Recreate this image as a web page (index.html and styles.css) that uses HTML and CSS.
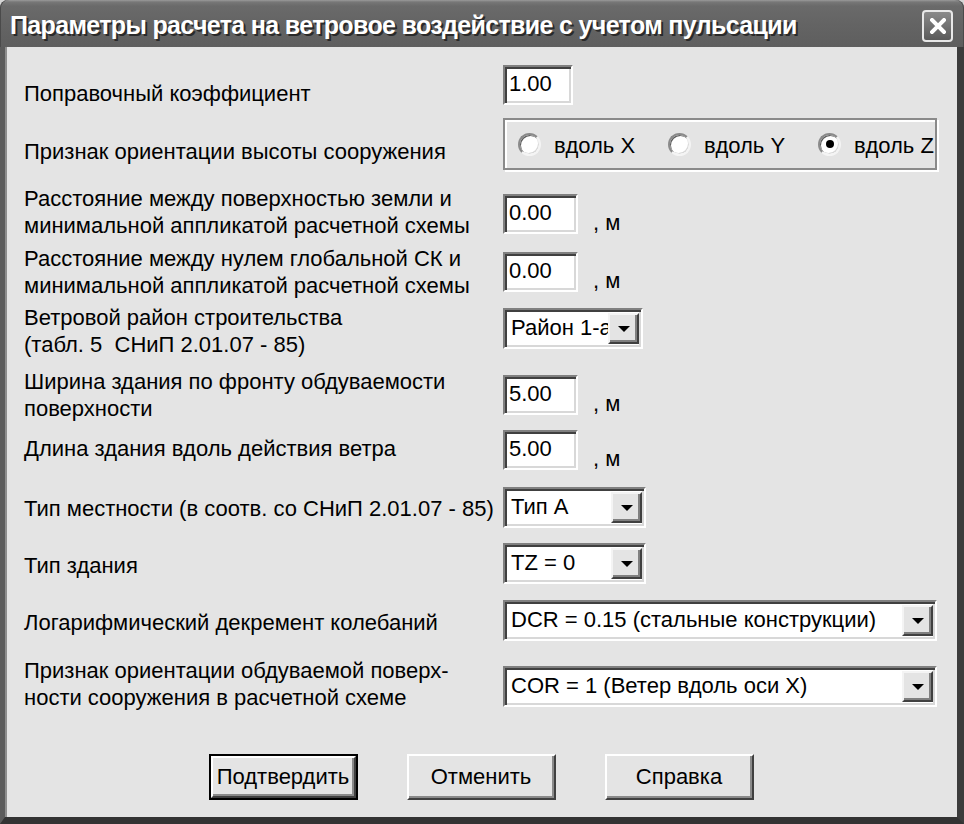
FILE: index.html
```html
<!DOCTYPE html>
<html lang="ru">
<head>
<meta charset="utf-8">
<title>Параметры расчета</title>
<link rel="stylesheet" href="styles.css">
</head>
<body>
<div class="window">
  <div class="titlebar">
    <span class="title">Параметры расчета на ветровое воздействие с учетом пульсации</span>
    <span class="close"><svg width="16" height="16" viewBox="0 0 16 16"><path d="M2 2 L14 14 M14 2 L2 14" stroke="#fff" stroke-width="4" stroke-linecap="square"/></svg></span>
  </div>
  <div class="frame">
    <div class="content">
      <div class="form">
        <div class="label off-15">Поправочный коэффициент</div>
        <div class="ctrl"><div class="edit edit-short">1.00</div></div>

        <div class="label off-20">Признак ориентации высоты сооружения</div>
        <div class="ctrl">
          <div class="group">
            <div class="option"><span class="radio"></span><span>вдоль X</span></div>
            <div class="option"><span class="radio"></span><span>вдоль Y</span></div>
            <div class="option"><span class="radio checked"></span><span>вдоль Z</span></div>
          </div>
        </div>

        <div class="label">Расстояние между поверхностью земли и<br>минимальной аппликатой расчетной схемы</div>
        <div class="ctrl off-9"><div class="edit">0.00</div><span class="unit">, м</span></div>

        <div class="label">Расстояние между нулем глобальной СК и<br>минимальной аппликатой расчетной схемы</div>
        <div class="ctrl off-7"><div class="edit">0.00</div><span class="unit">, м</span></div>

        <div class="label">Ветровой район строительства<br>(табл. 5&nbsp; СНиП 2.01.07 - 85)</div>
        <div class="ctrl off-4"><div class="select sel-140"><span class="sel-text">Район 1-а</span><span class="sel-btn"><span class="tri"></span></span></div></div>

        <div class="label">Ширина здания по фронту обдуваемости<br>поверхности</div>
        <div class="ctrl off-7"><div class="edit">5.00</div><span class="unit">, м</span></div>

        <div class="label off-5">Длина здания вдоль действия ветра</div>
        <div class="ctrl"><div class="edit">5.00</div><span class="unit">, м</span></div>

        <div class="label off-8">Тип местности (в соотв. со СНиП 2.01.07 - 85)</div>
        <div class="ctrl"><div class="select sel-143"><span class="sel-text">Тип А</span><span class="sel-btn"><span class="tri"></span></span></div></div>

        <div class="label off-9">Тип здания</div>
        <div class="ctrl"><div class="select sel-143"><span class="sel-text">TZ = 0</span><span class="sel-btn"><span class="tri"></span></span></div></div>

        <div class="label off-9">Логарифмический декремент колебаний</div>
        <div class="ctrl"><div class="select sel-wide"><span class="sel-text">DCR = 0.15 (стальные конструкции)</span><span class="sel-btn"><span class="tri"></span></span></div></div>

        <div class="label">Признак ориентации обдуваемой поверх-<br>ности сооружения в расчетной схеме</div>
        <div class="ctrl off-9"><div class="select sel-wide"><span class="sel-text">COR = 1 (Ветер вдоль оси X)</span><span class="sel-btn"><span class="tri"></span></span></div></div>
      </div>
      <div class="buttons">
        <div class="button default"><span class="btn-face">Подтвердить</span></div>
        <div class="button"><span class="btn-face">Отменить</span></div>
        <div class="button"><span class="btn-face">Справка</span></div>
      </div>
    </div>
  </div>
</div>
</body>
</html>
```
FILE: styles.css
```css
html, body {
  margin: 0;
  padding: 0;
  background: #d6d6d6;
}
body {
  font-family: "Liberation Sans", Arial, sans-serif;
  font-size: 22px;
  color: #000;
}
.window {
  width: 964px;
  height: 824px;
  display: flex;
  flex-direction: column;
}
.titlebar {
  height: 47px;
  flex: none;
  display: flex;
  align-items: flex-start;
  border-radius: 8px 8px 0 0;
  background: linear-gradient(#9a9a9a 0, #777 2px, #6a6a6a 6px, #646464 50%, #5e5e5e 100%);
  box-shadow: inset 1px 0 0 #4a4a4a, inset -1px 0 0 #4a4a4a;
}
.title {
  margin-left: 10px;
  margin-top: 10px;
  font-family: "Liberation Sans", Arial, sans-serif;
  font-weight: bold;
  font-size: 25px;
  letter-spacing: -0.65px;
  line-height: 30px;
  color: #fff;
  text-shadow: 2px 2px 0 #2a2a2a;
  white-space: nowrap;
}
.close {
  margin-left: auto;
  margin-right: 11px;
  margin-top: 10px;
  width: 31px;
  height: 32px;
  box-sizing: border-box;
  border: 2px solid #e8e8e8;
  border-radius: 4px;
  background: linear-gradient(#8a8a8a, #5a5a5a);
  display: flex;
  align-items: center;
  justify-content: center;
}
.frame {
  flex: 1;
  display: flex;
  border-left: 5px solid #5c5c5c;
  border-right: 7px solid #3c3c3c;
  border-bottom: 7px solid #333;
}
.content {
  flex: 1;
  background: #e4e4e4;
  border-left: 2px solid #8e8e8e;
  padding-top: 18px;
  display: flex;
  flex-direction: column;
}
.form {
  display: grid;
  grid-template-columns: 479px 434px;
  grid-template-rows: 53px 67px 60px 59px 64px 62px 57px 56px 57px 57px 54px;
  padding-left: 17px;
}
.label {
  line-height: 27px;
  white-space: nowrap;
  align-self: start;
}
.ctrl {
  display: flex;
  align-items: flex-end;
  align-self: start;
}
.off-4 { margin-top: 4px; }
.off-5 { margin-top: 5px; }
.off-7 { margin-top: 7px; }
.off-8 { margin-top: 8px; }
.off-9 { margin-top: 9px; }
.off-15 { margin-top: 15px; }
.off-20 { margin-top: 20px; }

.edit, .select {
  box-sizing: border-box;
  height: 40px;
  background: #fff;
  border: 2px solid;
  border-color: #808080 #fff #fff #808080;
  box-shadow: inset 2px 2px 0 #404040, inset -2px -2px 0 #d8d8d8;
}
.edit {
  width: 75px;
  padding: 0 0 4px 4px;
  display: flex;
  align-items: center;
  line-height: 27px;
}
.edit-short { width: 70px; }
.unit {
  margin-left: 15px;
  line-height: 27px;
  margin-bottom: -2px;
}
.select {
  height: 41px;
  display: flex;
  align-items: center;
  padding: 3px;
}
.sel-140 { width: 140px; }
.sel-143 { width: 143px; }
.sel-wide { width: 434px; }
.sel-text {
  flex: 1;
  min-width: 0;
  overflow: hidden;
  white-space: nowrap;
  padding-left: 3px;
  line-height: 27px;
  padding-bottom: 2px;
}
.sel-btn {
  flex: none;
  width: 31px;
  height: 31px;
  margin-right: -1px;
  box-sizing: border-box;
  background: #e4e4e4;
  border: 2px solid;
  border-color: #f4f4f4 #404040 #404040 #f4f4f4;
  box-shadow: inset -2px -2px 0 #808080;
  display: flex;
  align-items: center;
  justify-content: center;
}
.tri {
  width: 0;
  height: 0;
  border-left: 6px solid transparent;
  border-right: 6px solid transparent;
  border-top: 6px solid #000;
  margin-top: 1px;
}
.group {
  box-sizing: border-box;
  width: 434px;
  height: 52px;
  border: 2px solid #8a8a8a;
  box-shadow: inset 2px 2px 0 #fff, 2px 2px 0 #fff;
  display: flex;
  align-items: center;
  padding-left: 13px;
  overflow: hidden;
}
.option {
  flex: none;
  width: 150px;
  display: flex;
  align-items: center;
  gap: 13px;
  white-space: nowrap;
  line-height: 27px;
}
.option:last-child {
  width: 116px;
}
.option span:last-child {
  margin-top: 3px;
}
.radio {
  flex: none;
  width: 23px;
  height: 23px;
  box-sizing: border-box;
  border-radius: 50%;
  background: #fff;
  border: 2px solid;
  border-color: #8a8a8a #f4f4f4 #f4f4f4 #8a8a8a;
  box-shadow: inset 1px 1px 0 #5a5a5a, inset -1px -1px 0 #d8d8d8;
  display: flex;
  align-items: center;
  justify-content: center;
}
.radio.checked::after {
  content: "";
  width: 8px;
  height: 8px;
  border-radius: 50%;
  background: #000;
}
.buttons {
  display: flex;
  justify-content: center;
  gap: 49px;
  margin-top: 43px;
  padding-right: 2px;
}
.button {
  width: 149px;
  height: 46px;
  box-sizing: border-box;
  display: flex;
}
.btn-face {
  flex: 1;
  display: flex;
  align-items: center;
  justify-content: center;
  background: #e4e4e4;
  border: 2px solid;
  border-color: #fff #404040 #404040 #fff;
  box-shadow: inset -2px -2px 0 #8a8a8a;
  line-height: 27px;
  padding-bottom: 2px;
}
.button.default {
  border: 2px solid #000;
}
```
